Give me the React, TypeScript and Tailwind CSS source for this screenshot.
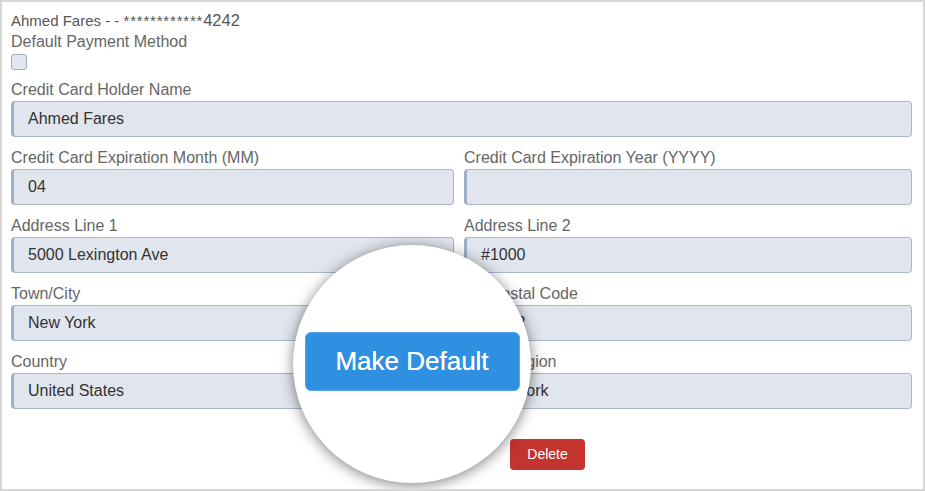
import React from "react";

function Field({ label, value }: { label: string; value: string }) {
  return (
    <div className="flex flex-col">
      <label className="leading-[20px] text-[16px] text-[#666] mb-[1px]">{label}</label>
      <div className="h-[36px] flex items-center rounded-[4px] border border-[#a9b7c9] border-l-[3px] border-l-[#9fb0c5] bg-[#e1e5ed] pl-[14px] text-[16px] text-[#333]">
        {value}
      </div>
    </div>
  );
}

export default function App() {
  return (
    <div
      className="relative w-[925px] h-[491px] border-2 border-[#d6d6d6] bg-white pl-[9px] pr-[11px] pt-[8px] overflow-hidden"
      style={{ fontFamily: '"Liberation Sans", Arial, sans-serif' }}
    >
      <div className="leading-[20px] text-[15px] text-[#555]">
        Ahmed Fares - - <span className="tracking-[0.8px]">************</span>
        <span className="text-[16.5px]">4242</span>
      </div>
      <div className="leading-[20px] text-[16px] text-[#666] mt-[1px]">Default Payment Method</div>
      <div className="mt-[2px] w-[16px] h-[16px] rounded-[3px] border border-[#a0aec0] bg-[#e2e6ee]" />
      <div className="mt-[10px] flex flex-col gap-[11px]">
        <Field label="Credit Card Holder Name" value="Ahmed Fares" />
        <div className="grid grid-cols-[443px_1fr] gap-x-[10px] gap-y-[11px]">
          <Field label="Credit Card Expiration Month (MM)" value="04" />
          <Field label="Credit Card Expiration Year (YYYY)" value="" />
          <Field label="Address Line 1" value="5000 Lexington Ave" />
          <Field label="Address Line 2" value="#1000" />
          <Field label="Town/City" value="New York" />
          <Field label="Zip/Postal Code" value="10022" />
          <Field label="Country" value="United States" />
          <Field label="State/Region" value="New York" />
        </div>
      </div>
      <div className="mt-[30px] flex">
        <button className="ml-[499px] w-[75px] h-[31px] rounded-[4px] bg-[#c4342f] text-white text-[14px]">
          Delete
        </button>
      </div>

      <div className="absolute left-[291px] top-[243px] w-[238px] h-[238px] rounded-full bg-white shadow-[0_2px_14px_rgba(0,0,0,0.5)] flex items-center justify-center">
        <button className="w-[215px] h-[59px] rounded-[6px] bg-[#2f8fe0] border border-[#55a6ea] text-white text-[26px] -mt-[5px] [text-shadow:0_0_0.6px_#fff]">
          Make Default
        </button>
      </div>
    </div>
  );
}
